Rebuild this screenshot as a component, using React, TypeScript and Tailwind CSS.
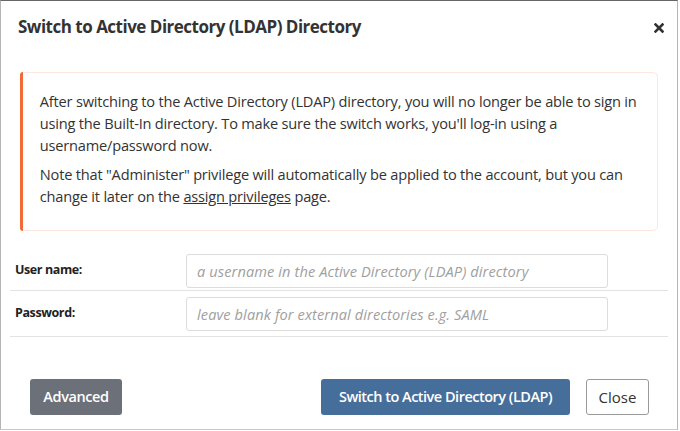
import React from "react";

export default function App() {
  return (
    <div
      className="w-[680px] h-[431px] bg-white overflow-hidden"
      style={{ fontFamily: '"Open Sans", "Noto Sans", sans-serif' }}
    >
      <div className="w-[678px] h-[430px] border-l border-t border-r border-b border-l-[#b5b5b5] border-r-[#b5b5b5] border-b-[#c8c8c8] border-t-[#666] flex flex-col">
        <div className="flex items-center justify-between h-[52px] pl-[17px] pr-[13px]">
          <h1 className="text-[17px] font-bold text-[#333] tracking-[-0.5px]">
            Switch to Active Directory (LDAP) Directory
          </h1>
          <svg width="10" height="10" viewBox="0 0 10 10" className="mt-[1px]">
            <path d="M1.5 1.5 L8.5 8.5 M8.5 1.5 L1.5 8.5" stroke="#333" strokeWidth="2.6" strokeLinecap="square" />
          </svg>
        </div>
        <div className="px-[19px] pt-[19px]">
          <div className="flex border border-[#fde7df] rounded-[5px] h-[159px]">
            <div className="w-[6px] bg-[#f26a35] rounded-l-[5px] -ml-px -my-px"></div>
            <div className="pl-[17px] pr-[14px] pt-[17px] text-[14.6px] leading-[22px] text-[#333] tracking-[-0.2px]">
              <p>
                After switching to the Active Directory (LDAP) directory, you will no longer be able to sign in
                using the Built-In directory. To make sure the switch works, you'll log-in using a
                username/password now.
              </p>
              <p className="mt-[7px]">
                Note that "Administer" privilege will automatically be applied to the account, but you can
                change it later on the <span className="underline">assign privileges</span> page.
              </p>
            </div>
          </div>
        </div>
        <div className="px-[9px] mt-[20px]">
          <div className="flex items-center h-[40px] border-b border-[#e3e3e3]">
            <label className="w-[176px] pl-[5px] text-[12.5px] font-bold text-[#222] tracking-[-0.4px]">User name:</label>
            <input
              className="w-[422px] h-[34px] border border-[#dcdcdc] rounded-[3px] px-[10px] text-[14.6px] italic placeholder:text-[#a0a0a0] outline-none tracking-[0.1px]"
              placeholder="a username in the Active Directory (LDAP) directory"
            />
          </div>
          <div className="flex items-center h-[46px] border-b border-[#e3e3e3]">
            <label className="w-[176px] pl-[5px] text-[12.5px] font-bold text-[#222] tracking-[-0.4px]">Password:</label>
            <input
              className="w-[422px] h-[34px] border border-[#dcdcdc] rounded-[3px] px-[10px] text-[14.6px] italic placeholder:text-[#a0a0a0] outline-none tracking-[0.1px]"
              placeholder="leave blank for external directories e.g. SAML"
            />
          </div>
        </div>
        <div className="flex items-center mt-[42px] pl-[29px] pr-[28px]">
          <button className="h-[36px] w-[92px] bg-[#6b7079] text-white text-[14.5px] font-semibold rounded-[3px] tracking-[-0.4px]">
            Advanced
          </button>
          <div className="flex-1"></div>
          <button className="h-[36px] w-[249px] bg-[#466e9b] text-white text-[14.5px] font-semibold rounded-[3px] tracking-[-0.5px]">
            Switch to Active Directory (LDAP)
          </button>
          <button className="ml-[16px] h-[36px] w-[63px] bg-white border border-[#9a9a9a] text-[#333] text-[15px] rounded-[3px]">
            Close
          </button>
        </div>
      </div>
    </div>
  );
}
